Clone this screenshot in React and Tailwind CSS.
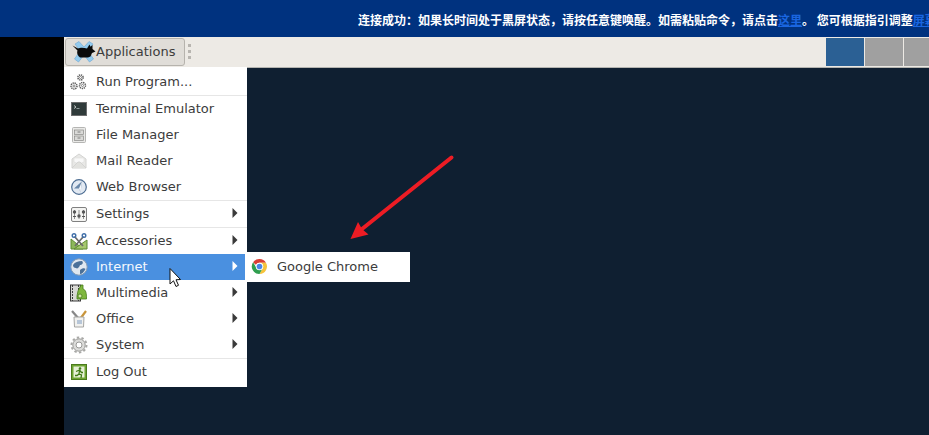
import React from 'react';

const XfceLogo = () => (
  <svg width="24" height="24" viewBox="0 0 24 24">
    <path d="M3 4 L7 1.5 L12 7 L17 1.5 L21 4 L16 11 L21.5 19 L17.5 22 L12 15 L6.5 22 L2.5 19 L8 11 Z" fill="#93cbee" stroke="#6ba5d3" strokeWidth="0.6" />
    <path d="M0.5 5.5 L6 8.5 C8 7.5 12 7.5 15 8.5 L17.5 4.5 L18.5 6.8 L20.5 5 L20.5 9 L23.5 11.5 L20 13 L18.5 16.5 L16 17.5 L8 17.5 C6 16 4.5 13 5.5 10.5 Z" fill="#0a0a0a" />
  </svg>
);

const RunIcon = () => (
  <svg width="17" height="17" viewBox="0 0 17 17" fill="#fff" stroke="#5a5a5a">
    <circle cx="10.5" cy="3.5" r="2.6" strokeWidth="1.5" strokeDasharray="1.3 0.75" />
    <circle cx="10.5" cy="3.5" r="1" strokeWidth="0.7" />
    <circle cx="4" cy="12" r="3" strokeWidth="1.5" strokeDasharray="1.3 0.75" />
    <circle cx="4" cy="12" r="1.1" strokeWidth="0.7" />
    <circle cx="12.5" cy="11.5" r="3" strokeWidth="1.5" strokeDasharray="1.3 0.75" />
    <circle cx="12.5" cy="11.5" r="1.1" strokeWidth="0.7" />
  </svg>
);

const TerminalIcon = () => (
  <svg width="16" height="14" viewBox="0 0 16 14">
    <rect x="0.5" y="0.5" width="15" height="13" fill="#2f3b3b" stroke="#6d6d6d" />
    <rect x="2" y="2" width="12" height="10" fill="#303b3a" />
    <path d="M3 3.5 L5 5 L3 6.5" fill="none" stroke="#dfe6e6" strokeWidth="0.8" />
    <path d="M5.5 6.5 H8.5" stroke="#aab5b5" strokeWidth="0.8" />
  </svg>
);

const FileIcon = () => (
  <svg width="14" height="16" viewBox="0 0 14 16">
    <rect x="0.5" y="0.5" width="13" height="15" rx="1" fill="#e9e9e7" stroke="#b5b5b3" />
    <rect x="2.5" y="3" width="9" height="4.5" fill="#dadad8" stroke="#8a8a88" strokeWidth="0.7" />
    <rect x="2.5" y="9" width="9" height="4.5" fill="#dadad8" stroke="#8a8a88" strokeWidth="0.7" />
    <path d="M5.5 5 H8.5 M5.5 11 H8.5" stroke="#666" strokeWidth="0.8" />
  </svg>
);

const MailIcon = () => (
  <svg width="16" height="16" viewBox="0 0 16 16">
    <path d="M1 6 L8 1 L15 6 V15 H1 Z" fill="#e8e8e6" stroke="#d4d4d2" />
    <path d="M3 5 H13 V9 L8 11 L3 9 Z" fill="#f8f8f8" stroke="#dcdcda" strokeWidth="0.6" />
    <path d="M1 15 L7 9 H9 L15 15" fill="#e2e2df" stroke="#cdcdcb" strokeWidth="0.7" />
  </svg>
);

const WebIcon = () => (
  <svg width="16" height="16" viewBox="0 0 16 16">
    <circle cx="8" cy="8" r="7.3" fill="#e2e9f2" stroke="#4d6d92" strokeWidth="1.2" />
    <path d="M11 2.2 L9.5 13.5 L8 9.5 L3 9.5 Z" fill="#6a88aa" />
    <path d="M11 2.2 L8 9.5 L9.5 13.5 Z" fill="#f6f8fa" />
  </svg>
);

const SettingsIcon = () => (
  <svg width="16" height="15" viewBox="0 0 16 15">
    <rect x="0.5" y="0.5" width="15" height="14" rx="1.5" fill="#f4f4f2" stroke="#808080" />
    <path d="M3.5 3 V12 M8 3 V12 M12.5 3 V12" stroke="#777" strokeWidth="0.8" />
    <circle cx="3.5" cy="5" r="1.7" fill="#555" />
    <circle cx="8" cy="9" r="1.7" fill="#555" />
    <circle cx="12.5" cy="5" r="1.7" fill="#555" />
    <path d="M2 9.5 H5 M11 9.5 H14" stroke="#555" strokeWidth="1.2" />
  </svg>
);

const AccessoriesIcon = () => (
  <svg width="18" height="17" viewBox="0 0 18 17">
    <path d="M1 16 V6 L13 16 Z" fill="#8db85a" stroke="#5d8a30" />
    <path d="M17 16 H4 L17 7 Z" fill="#a6c86e" stroke="#5d8a30" />
    <path d="M4.5 3.5 L13 13 M13.5 3.5 L5 13" stroke="#6c6c6c" strokeWidth="1.8" />
    <circle cx="4" cy="2.6" r="1.8" fill="none" stroke="#3f6ea8" strokeWidth="1.4" />
    <circle cx="14" cy="2.6" r="1.8" fill="none" stroke="#3f6ea8" strokeWidth="1.4" />
  </svg>
);

const InternetIcon = () => (
  <svg width="18" height="18" viewBox="0 0 18 18">
    <circle cx="9" cy="9" r="8.2" fill="#dfe7f0" stroke="#8299b2" />
    <path d="M3 7 C5 4 8 3 12 3 C14 5 12 7 10 7 C9 10 7 11 6 10 C4 10 3 9 3 7 Z" fill="#4a7099" />
    <path d="M10 12 C12 10 15 10 15.5 11 C14 14 12 16 10 16 Z" fill="#4a7099" />
  </svg>
);

const MultimediaIcon = () => (
  <svg width="17" height="18" viewBox="0 0 17 18">
    <rect x="0.5" y="1" width="10" height="16" fill="#d8d8d4" stroke="#3a3a3a" />
    <path d="M2.5 1 V17 M8.5 1 V17" stroke="#3a3a3a" strokeWidth="1" strokeDasharray="2 1" />
    <path d="M8 7 L11 1 H13 V5 C16 6 16.5 9 16.5 15 H7 V12 Z" fill="#7fb73e" stroke="#467b1b" strokeWidth="0.8" />
    <circle cx="10" cy="12" r="2" fill="#d4e8a8" stroke="#467b1b" strokeWidth="0.8" />
  </svg>
);

const OfficeIcon = () => (
  <svg width="16" height="18" viewBox="0 0 16 18">
    <path d="M1 1 L8 9" stroke="#888" strokeWidth="2.2" />
    <path d="M15 1 L9 9" stroke="#c9953a" strokeWidth="2.2" />
    <path d="M3 7 H13 L12.5 17 H3.5 Z" fill="#f1f1ef" stroke="#a5a5a3" />
    <rect x="6" y="10" width="5" height="4" fill="#b7c6d8" />
  </svg>
);

const SystemIcon = () => (
  <svg width="18" height="18" viewBox="0 0 18 18">
    <circle cx="9" cy="9" r="6.2" fill="#dcdcda" stroke="#9a9a98" strokeWidth="1" />
    <circle cx="9" cy="9" r="7.5" fill="none" stroke="#a8a8a6" strokeWidth="2" strokeDasharray="2.4 2.3" />
    <circle cx="9" cy="9" r="3" fill="#fff" stroke="#9a9a98" />
  </svg>
);

const LogoutIcon = () => (
  <svg width="16" height="16" viewBox="0 0 16 16">
    <rect x="0.5" y="0.5" width="15" height="15" fill="#6ea533" stroke="#4a7a1c" />
    <rect x="2.5" y="2.5" width="11" height="11" fill="#e6f0d6" />
    <circle cx="9" cy="4.5" r="1.3" fill="#3f7a16" />
    <path d="M5 7.5 L8.5 6 L10.5 8.5 L12 8.5 M8.5 6.5 L8 10 L10.5 11 L10 14 M8 10 L6 11.5 L4 11.5" fill="none" stroke="#3f7a16" strokeWidth="1.3" />
  </svg>
);

const ChromeIcon = () => (
  <svg width="17" height="17" viewBox="0 0 48 48">
    <path d="M24 3 A21 21 0 0 1 42.2 13.5 H24 A10.5 10.5 0 0 0 14.5 20 L6 12 A21 21 0 0 1 24 3 Z" fill="#d93f35" />
    <path d="M42.2 13.5 A21 21 0 0 1 24 45 L33 29 A10.5 10.5 0 0 0 24 13.5 Z" fill="#f6c33c" />
    <path d="M6 12 L15.5 28.5 A10.5 10.5 0 0 0 33 29 L24 45 A21 21 0 0 1 6 12 Z" fill="#2f9e4f" />
    <circle cx="24" cy="24" r="10.5" fill="#fff" />
    <circle cx="24" cy="24" r="8" fill="#4a86e8" />
  </svg>
);

const Caret = ({ active }) => (
  <svg width="6" height="10" viewBox="0 0 6 10" className={`ml-auto mb-[2px] ${active ? 'mr-[7px]' : 'mr-[9px]'}`}>
    <path d="M0.5 0 L5.5 5 L0.5 10 Z" fill={active ? '#ffffff' : '#3a3a3a'} />
  </svg>
);

const Row = ({ icon, label, sub, active }) => (
  <div className={`flex items-center h-[26px] ${active ? 'bg-[#4a90e0] text-[#f4f8fd] mr-[2px]' : 'text-[#3c3c3c]'}`}>
    <div className="w-[32px] flex justify-center pr-[3px]">{icon}</div>
    <span>{label}</span>
    {sub && <Caret active={active} />}
  </div>
);

const Sep = () => <div className="h-[1px] bg-[#e6e6e6]"></div>;

const App = () => {
  return (
    <div className="relative w-[929px] h-[435px] overflow-hidden flex flex-col bg-black font-['DejaVu_Sans',sans-serif] text-[13px]">
      {/* notice banner */}
      <div className="h-[37px] shrink-0 bg-[#00327f] flex items-center pl-[358px] pt-[3px] whitespace-nowrap font-bold text-[12px] text-white font-['Noto_Sans_CJK_SC',sans-serif]">
        连接成功：如果长时间处于黑屏状态，请按任意键唤醒。如需粘贴命令，请点击<span className="text-[#1a66e0] underline">这里</span>。 您可根据指引调整<span className="text-[#1a66e0] underline">屏幕</span>
      </div>

      <div className="flex flex-1 min-h-0">
        <div className="w-[64px] shrink-0 bg-black"></div>

        <div className="flex-1 flex flex-col min-w-0 bg-[#0f1f31]">
          {/* panel */}
          <div className="h-[31px] shrink-0 bg-[#edeae5] border-b border-[#b4b4b0] flex items-center pl-[1px] pb-[1px]">
            <div className="h-[28px] w-[120px] flex items-center pl-[6px] bg-[#e0ddd8] border border-[#b6b3ad] rounded-[3px] text-[#3c3c3c]">
              <XfceLogo />
              <span>Applications</span>
            </div>
            <div className="flex flex-col gap-[3px] ml-[3px]">
              <div className="w-[3px] h-[3px] bg-[#b8b5b0]"></div>
              <div className="w-[3px] h-[3px] bg-[#b8b5b0]"></div>
              <div className="w-[3px] h-[3px] bg-[#b8b5b0]"></div>
            </div>
            <div className="ml-auto flex gap-[1px] h-[28px]">
              <div className="w-[38px] bg-[#2b6094]"></div>
              <div className="w-[38px] bg-[#a0a0a0]"></div>
              <div className="w-[25px] bg-[#a0a0a0]"></div>
            </div>
          </div>
          <div className="flex-1"></div>
        </div>
      </div>

      {/* applications menu */}
      <div className="absolute left-[64px] top-[67px] w-[183px] bg-white pt-[2px] pb-[2px]">
        <Row icon={<RunIcon />} label="Run Program..." />
        <Sep />
        <Row icon={<TerminalIcon />} label="Terminal Emulator" />
        <Row icon={<FileIcon />} label="File Manager" />
        <Row icon={<MailIcon />} label="Mail Reader" />
        <Row icon={<WebIcon />} label="Web Browser" />
        <Sep />
        <Row icon={<SettingsIcon />} label="Settings" sub />
        <Sep />
        <Row icon={<AccessoriesIcon />} label="Accessories" sub />
        <Row icon={<InternetIcon />} label="Internet" sub active />
        <Row icon={<MultimediaIcon />} label="Multimedia" sub />
        <Row icon={<OfficeIcon />} label="Office" sub />
        <Row icon={<SystemIcon />} label="System" sub />
        <Sep />
        <Row icon={<LogoutIcon />} label="Log Out" />
      </div>

      {/* submenu */}
      <div className="absolute left-[247px] top-[252px] w-[163px] h-[30px] bg-white flex items-center text-[#3c3c3c] pb-[1px]">
        <div className="w-[30px] flex justify-center pr-[6px]"><ChromeIcon /></div>
        <span>Google Chrome</span>
      </div>

      {/* annotation arrow */}
      <svg className="absolute left-[340px] top-[150px]" width="120" height="100" viewBox="0 0 120 100">
        <path d="M111.5 7.5 L22 79" stroke="#ed1c24" strokeWidth="4" strokeLinecap="round" />
        <path d="M10.5 89 L18 72 L22 79 L28.5 84.5 Z" fill="#ed1c24" />
      </svg>

      {/* mouse pointer */}
      <svg className="absolute left-[168px] top-[267px]" width="14" height="22" viewBox="0 0 14 22">
        <path d="M2 1.5 V17 L5.5 13.8 L8 19.5 L10.5 18.3 L8 12.8 L12.5 12.5 Z" fill="#fff" stroke="#111" strokeWidth="1" />
      </svg>
    </div>
  );
};

export default App;
